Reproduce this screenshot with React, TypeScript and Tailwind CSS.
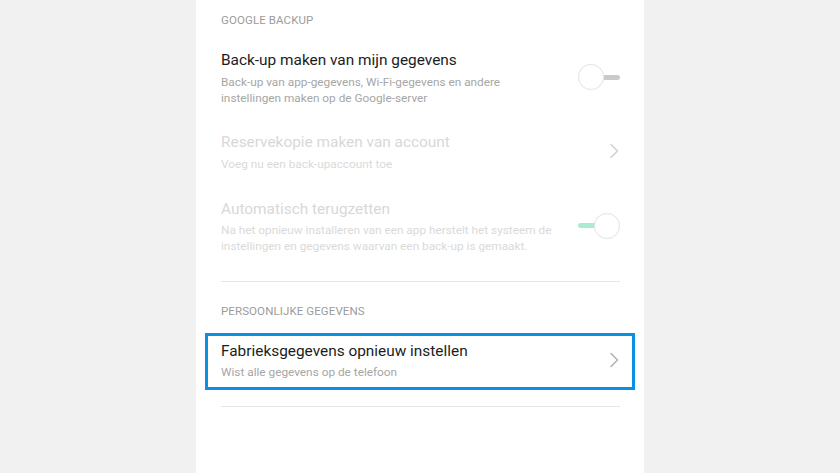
import React from "react";

type ToggleProps = {
    on: boolean;
};

function Toggle({ on }: ToggleProps) {
    return (
        <div className="flex h-[26px] w-[42px] items-center">
            {on ? (
                <>
                    <div className="h-[5px] w-[17px] rounded-l-full bg-[#a9ecd1]" />
                    <div className="-ml-[1px] h-[26px] w-[26px] rounded-full border border-[#e6e6e6] bg-white shadow-[0_0_1px_rgba(0,0,0,0.06)]" />
                </>
            ) : (
                <>
                    <div className="h-[26px] w-[26px] rounded-full border border-[#e6e6e6] bg-white shadow-[0_0_1px_rgba(0,0,0,0.06)]" />
                    <div className="h-[5px] w-[16px] rounded-r-full bg-[#cacaca]" />
                </>
            )}
        </div>
    );
}

function Chevron({ color }: { color: string }) {
    return (
        <svg width="10" height="16" viewBox="0 0 10 16" className="mr-[1px]">
            <polyline points="2,1.5 8.5,8 2,14.5" fill="none" stroke={color} strokeWidth="1.6" strokeLinecap="round" strokeLinejoin="round" />
        </svg>
    );
}

export default function App() {
    return (
        <div className="flex h-[473px] w-full justify-center bg-[#f1f1f1] font-['Roboto',sans-serif]">
            <div className="h-full w-[448px] bg-white pl-[25px] pr-[24px]">
                {/* Google backup */}
                <div className="pt-[13px] text-[11.5px] leading-[14px] tracking-[0.1px] text-[#9c9c9c]">
                    GOOGLE BACKUP
                </div>

                <div className="flex items-center justify-between pt-[23px]">
                    <div>
                        <div className="text-[15.4px] leading-[20px] text-[#1c1c1c]">Back-up maken van mijn gegevens</div>
                        <div className="mt-[4px] text-[11.8px] leading-[16px] text-[#a6a6a6]">
                            Back-up van app-gegevens, Wi-Fi-gegevens en andere
                            <br />
                            instellingen maken op de Google-server
                        </div>
                    </div>
                    <div className="-mt-[2px]">
                        <Toggle on={false} />
                    </div>
                </div>

                <div className="flex items-center justify-between pt-[26px]">
                    <div>
                        <div className="text-[15.4px] leading-[20px] text-[#d8d8d8]">Reservekopie maken van account</div>
                        <div className="mt-[4px] text-[11.8px] leading-[16px] text-[#dadada]">Voeg nu een back-upaccount toe</div>
                    </div>
                    <div className="-mt-[2px]">
                        <Chevron color="#d2d2d2" />
                    </div>
                </div>

                <div className="flex items-center justify-between pt-[27px]">
                    <div>
                        <div className="text-[15.4px] leading-[20px] text-[#d8d8d8]">Automatisch terugzetten</div>
                        <div className="mt-[3px] text-[11.8px] leading-[16px] text-[#dadada]">
                            Na het opnieuw installeren van een app herstelt het systeem de
                            <br />
                            instellingen en gegevens waarvan een back-up is gemaakt.
                        </div>
                    </div>
                    <div className="-mt-[2px]">
                        <Toggle on={true} />
                    </div>
                </div>

                <div className="mt-[27px] h-px bg-[#e6e6e6]" />

                {/* Persoonlijke gegevens */}
                <div className="pt-[22px] text-[11.5px] leading-[14px] tracking-[0.1px] text-[#9c9c9c]">
                    PERSOONLIJKE GEGEVENS
                </div>

                <div className="-ml-[16px] -mr-[15px] mt-[15px] flex items-center justify-between border-[3px] border-[#0a90e2] pb-[7px] pl-[13px] pr-[12px] pt-[5px]">
                    <div>
                        <div className="text-[15.4px] leading-[20px] text-[#1c1c1c]">Fabrieksgegevens opnieuw instellen</div>
                        <div className="mt-[3px] text-[11.8px] leading-[16px] text-[#a6a6a6]">Wist alle gegevens op de telefoon</div>
                    </div>
                    <div className="-mt-[2px]">
                        <Chevron color="#b3b3b3" />
                    </div>
                </div>

                <div className="mt-[16px] h-px bg-[#e6e6e6]" />
            </div>
        </div>
    );
}
